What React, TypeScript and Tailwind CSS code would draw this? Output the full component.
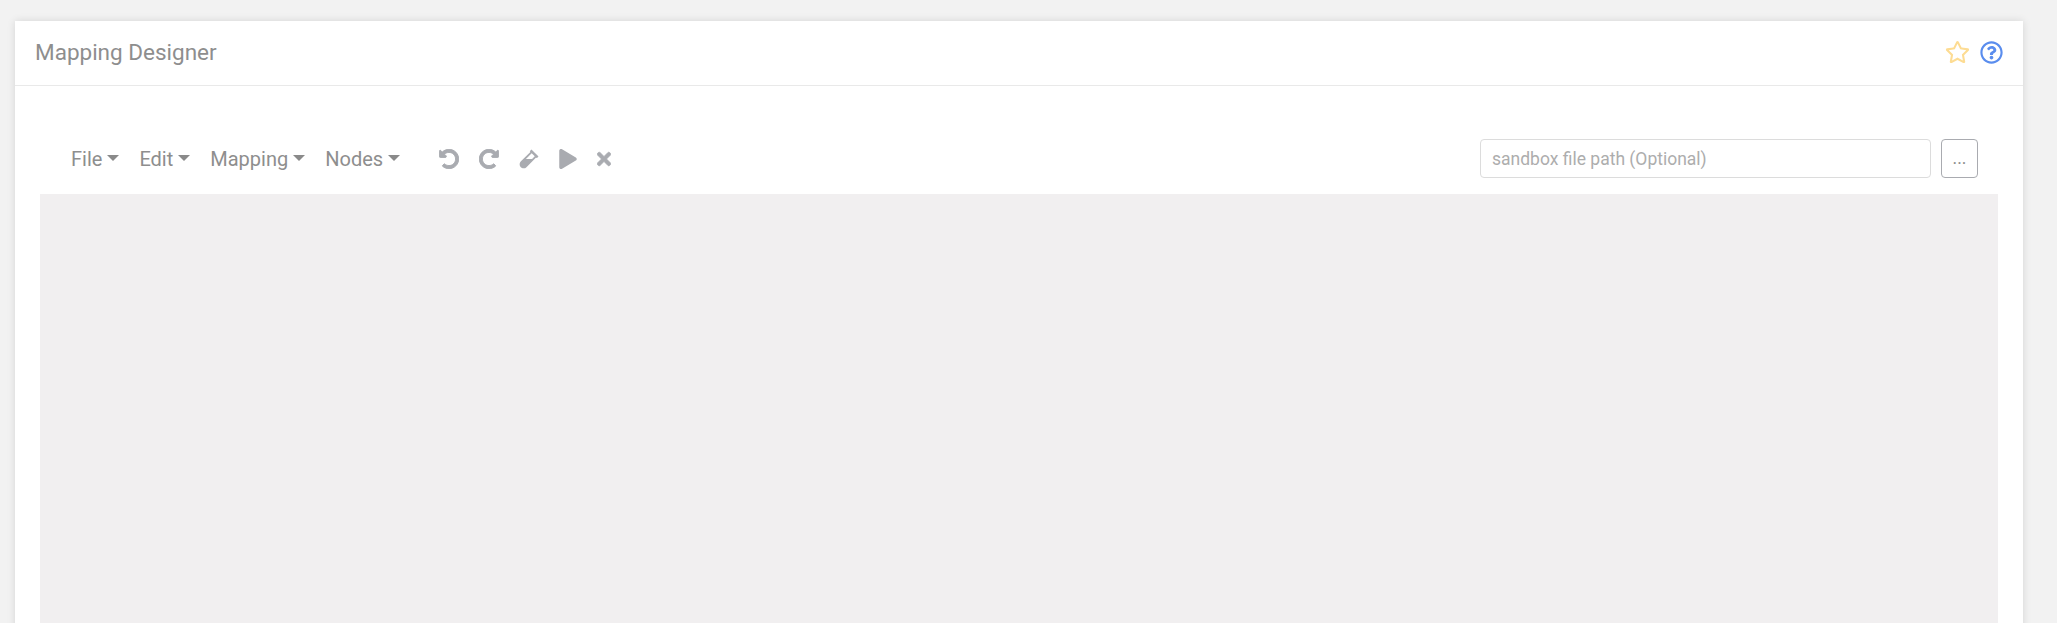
import { FaPlay, FaRedoAlt, FaRegQuestionCircle, FaRegStar, FaTimes, FaUndoAlt, FaVial } from "react-icons/fa";

const menus = ["File", "Edit", "Mapping", "Nodes"];

function MenuItem({ label }: { label: string }) {
    return (
        <button className="flex items-center gap-[5px] px-[10px] text-[20px] leading-[30px] text-[#8e8e8e]">
            {label}
            <span className="mt-[-2px] h-0 w-0 border-x-[6px] border-t-[6px] border-x-transparent border-t-[#8a8a8a]" />
        </button>
    );
}

export default function App() {
    return (
        <div className="h-[623px] overflow-hidden bg-[#f2f2f2] pl-[15px] pr-[34px] pt-[21px] font-['Roboto',sans-serif]">
            <div className="h-[640px] bg-white shadow-[0_0_8px_rgba(0,0,0,0.12)]">
                {/* Card header */}
                <div className="flex h-[65px] items-center justify-between border-b border-[#e9e9e9] pl-[20px] pr-[20px]">
                    <h1 className="text-[22.5px] font-normal text-[#8e8e8e]">Mapping Designer</h1>
                    <div className="-mt-[2px] flex items-center gap-[10px]">
                        <FaRegStar className="h-[24px] w-[25px] text-[#fddc93]" />
                        <FaRegQuestionCircle className="h-[23px] w-[23px] text-[#5a8dee]" />
                    </div>
                </div>

                {/* Toolbar */}
                <div className="px-[25px] pt-[52px]">
                    <div className="flex h-[40px] items-center pl-[21px] pr-[20px]">
                        <div className="flex pt-[2px]">
                            {menus.map((m) => (
                                <MenuItem key={m} label={m} />
                            ))}
                        </div>
                        <div className="ml-[29px] flex items-center gap-[20px] pt-[1px] text-[#a9abb0]">
                            <FaUndoAlt className="h-[20px] w-[20px] stroke-current stroke-[24]" />
                            <FaRedoAlt className="h-[20px] w-[20px] stroke-current stroke-[24]" />
                            <FaVial className="h-[20px] w-[20px]" />
                            <FaPlay className="h-[20px] w-[18px]" />
                            <FaTimes className="h-[20px] w-[14px] stroke-current stroke-[16]" />
                        </div>
                        <div className="ml-auto flex items-center gap-[10px]">
                            <input
                                placeholder="sandbox file path (Optional)"
                                className="h-[39px] w-[451px] rounded-[4px] border border-[#dcdcdc] px-[11px] pt-[2px] text-[17.5px] text-[#8e8e8e] outline-none placeholder:text-[#adadad]"
                            />
                            <button className="h-[39px] w-[37px] rounded-[4px] border border-[#a9abb0] text-[17.5px] text-[#8e8e8e]">...</button>
                        </div>
                    </div>

                    {/* Canvas */}
                    <div className="mt-[16px] h-[500px] bg-[#f1eff0]" />
                </div>
            </div>
        </div>
    );
}
